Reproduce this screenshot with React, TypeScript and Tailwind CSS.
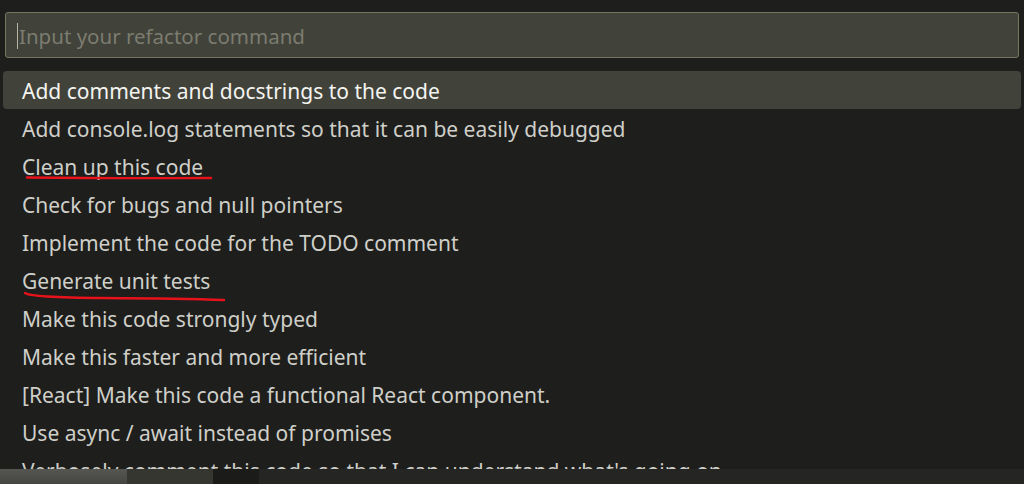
import React from 'react';

const commands = [
    'Add comments and docstrings to the code',
    'Add console.log statements so that it can be easily debugged',
    'Clean up this code',
    'Check for bugs and null pointers',
    'Implement the code for the TODO comment',
    'Generate unit tests',
    'Make this code strongly typed',
    'Make this faster and more efficient',
    '[React] Make this code a functional React component.',
    'Use async / await instead of promises',
    "Verbosely comment this code so that I can understand what's going on",
];

// hand-drawn red marks under two of the items
const Underline: React.FC<{ width: number; d: string }> = ({ width, d }) => (
    <svg className="absolute left-0 top-0 pointer-events-none overflow-visible" width={width} height={38} viewBox={`0 0 ${width} 38`}>
        <path d={d} fill="none" stroke="#e8121b" strokeWidth={2.4} strokeLinecap="round" />
    </svg>
);

export default function App() {
    return (
        <div
            className="w-full h-[484px] bg-[#1e1e1c] flex flex-col overflow-hidden"
            style={{ fontFamily: '"Noto Sans", "Open Sans", sans-serif' }}
        >
            <div className="px-[5px] pt-[12px] shrink-0">
                <div className="h-[46px] rounded-[3px] border border-[#78765f] bg-[#41423a] flex items-center pl-[11px] pt-[2px]">
                    <span className="w-px h-[26px] bg-[#b5b5a8] mr-[1px]" />
                    <span className="text-[20.5px] text-[#7c7c70] leading-none">Input your refactor command</span>
                </div>
            </div>

            <div className="flex-1 min-h-0 px-[3px] pt-[13px] overflow-hidden">
                {commands.map((c, i) => (
                    <div
                        key={c}
                        className={`relative h-[38px] flex items-center pl-[19px] pt-[3px] text-[21px] whitespace-nowrap ${
                            i === 0 ? 'bg-[#41423a] rounded-[4px] text-[#f4f4f0]' : 'text-[#cfcfc9]'
                        }`}
                    >
                        {c}
                        {i === 2 && <Underline width={230} d="M24 30.5 Q110 31.5 208 31" />}
                        {i === 5 && <Underline width={240} d="M22 32 Q28 36.5 100 37 Q180 37.5 221 39" />}
                    </div>
                ))}
            </div>

            <div className="h-[15px] shrink-0 flex">
                <div className="w-[127px] bg-gradient-to-b from-[#555551] to-[#454541]" />
                <div className="w-[86px] bg-[#35362f]" />
                <div className="w-[46px] bg-[#1b1b19]" />
                <div className="flex-1 bg-[#252523]" />
            </div>
        </div>
    );
}
